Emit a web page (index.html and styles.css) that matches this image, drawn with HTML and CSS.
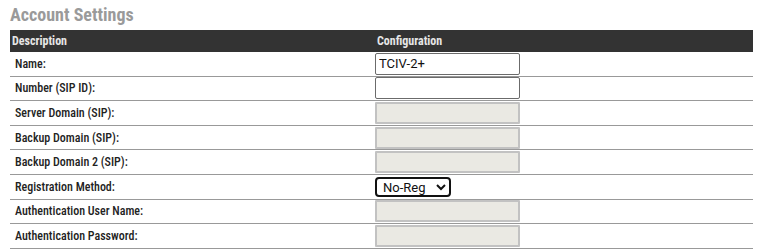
FILE: index.html
```html
<!DOCTYPE html>
<html lang="en">
<head>
  <meta charset="UTF-8">
  <meta name="viewport" content="width=device-width, initial-scale=1.0">
  <title>Account Settings</title>
  <link rel="stylesheet" href="styles.css">
</head>
<body>
  <div class="page">
    <h2 class="title">Account Settings</h2>
    <table class="settings">
      <thead>
        <tr>
          <th class="col-desc">Description</th>
          <th class="col-conf">Configuration</th>
        </tr>
      </thead>
      <tbody>
        <tr>
          <td>Name:</td>
          <td><input type="text" class="field" value="TCIV-2+"></td>
        </tr>
        <tr>
          <td>Number (SIP ID):</td>
          <td><input type="text" class="field" value=""></td>
        </tr>
        <tr>
          <td>Server Domain (SIP):</td>
          <td><input type="text" class="field" disabled></td>
        </tr>
        <tr>
          <td>Backup Domain (SIP):</td>
          <td><input type="text" class="field" disabled></td>
        </tr>
        <tr>
          <td>Backup Domain 2 (SIP):</td>
          <td><input type="text" class="field" disabled></td>
        </tr>
        <tr>
          <td>Registration Method:</td>
          <td>
            <select class="choice">
              <option>No-Reg</option>
              <option>Register</option>
            </select>
          </td>
        </tr>
        <tr>
          <td>Authentication User Name:</td>
          <td><input type="text" class="field" disabled></td>
        </tr>
        <tr>
          <td>Authentication Password:</td>
          <td><input type="password" class="field" disabled></td>
        </tr>
      </tbody>
    </table>
  </div>
</body>
</html>
```

FILE: styles.css
```css
body{
  margin: 0;
  font-family: Roboto, "Liberation Sans", sans-serif;
  color: #222;
  background: #fff;
}
.page{
  padding: 4px 14px 0 10px;
}
.title{
  margin: 0 0 5px;
  font-size: 18px;
  line-height: 21px;
  font-weight: 700;
  font-stretch: 77%;
  color: #9a9a9a;
}
.settings{
  width: 100%;
  border-collapse: collapse;
  font-size: 12px;
  font-stretch: 79%;
}
.settings th{
  height: 22px;
  padding: 0 2px;
  text-align: left;
  font-weight: 700;
  color: #e6e6e6;
  background-color: #333;
}
.settings .col-desc{
  width: 361px;
}
.settings td{
  height: 23.6px;
  padding: 0;
  border-bottom: 1px solid #999;
  font-weight: 500;
}
.settings td:first-child{
  padding-left: 5px;
}
.field{
  box-sizing: border-box;
  display: block;
  width: 145px;
  height: 22px;
  margin: 0;
  padding: 0 3px;
  border: 1px solid #6b6b6b;
  border-radius: 2px;
  font-family: Roboto, "Liberation Sans", sans-serif;
  font-size: 13px;
  color: #111;
  background: #fff;
}
.field:disabled{
  border: 2px solid #c2c2c2;
  border-radius: 1px;
  background: #eae9e3;
}
.choice{
  display: block;
  box-sizing: border-box;
  width: 76px;
  height: 20px;
  margin: 0;
  padding: 0 2px;
  border: 2px solid #111;
  border-radius: 4px;
  font-family: Roboto, "Liberation Sans", sans-serif;
  font-size: 13px;
  color: #111;
  background: #fff;
}
```
